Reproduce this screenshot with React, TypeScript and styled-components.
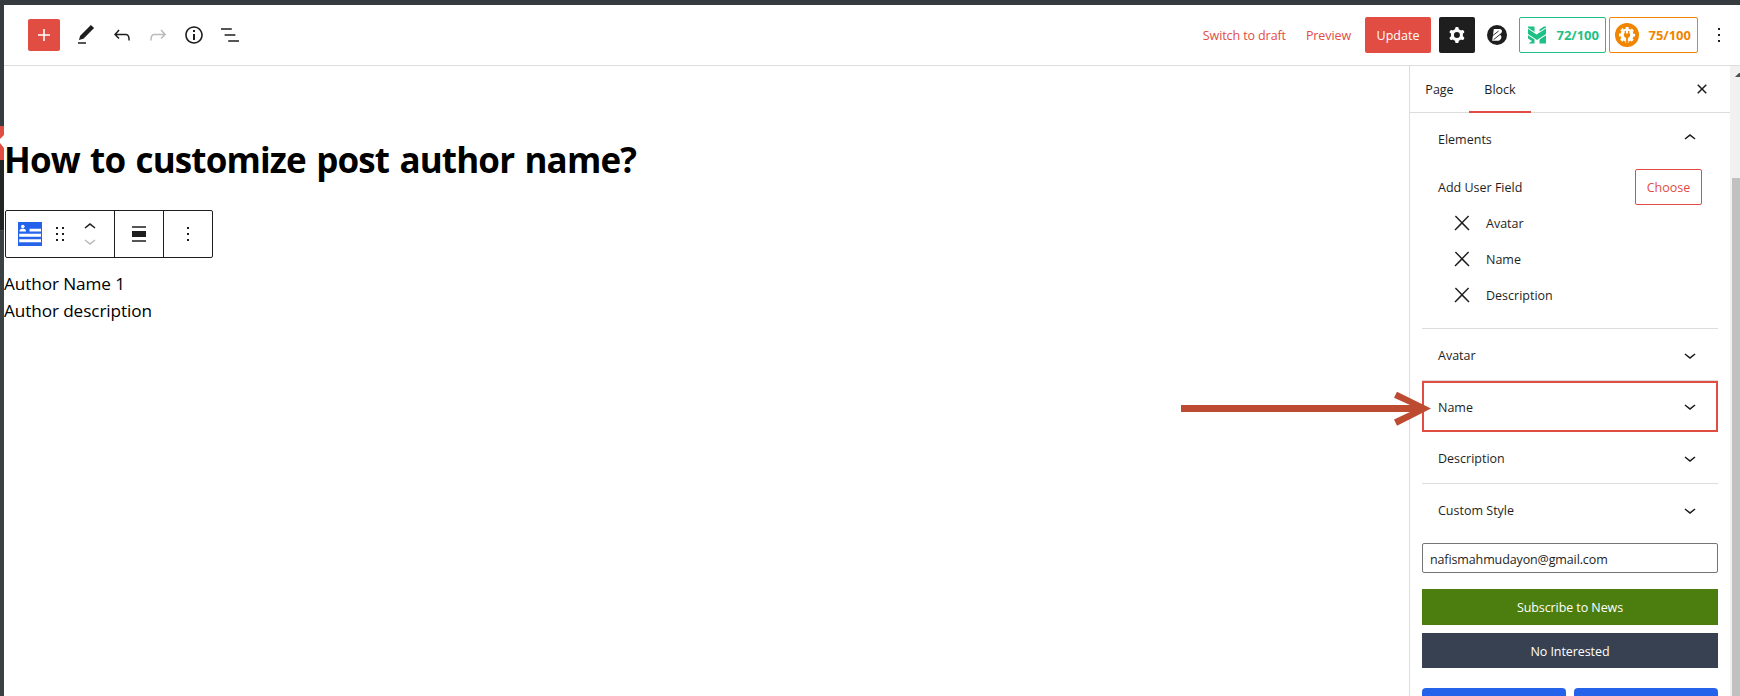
import React from "react";
import styled, { createGlobalStyle } from "styled-components";

const Global = createGlobalStyle`
  *, *::before, *::after { box-sizing: border-box; }
  html, body { margin: 0; padding: 0; }
  body {
    width: 1740px; height: 696px; overflow: hidden; background: #fff; color: #1e1e1e;
    font-family: "Open Sans", "Noto Sans", sans-serif; font-size: 12.5px; line-height: 18px;
  }
  button, input { font: inherit; color: inherit; margin: 0; }
  svg { display: block; flex: none; }
`;

const Page = styled.div`
  position: relative; width: 1740px; height: 696px; overflow: hidden;
  display: flex; flex-direction: column;
`;
const AdminBar = styled.div`height: 5px; flex: none; background: #363b3f;`;
const Shell = styled.div`display: flex; flex: 1; min-height: 0;`;
const AdminMenu = styled.div`width: 4px; flex: none; display: flex; flex-direction: column; background: #3b4042;`;
const MenuSlice = styled.div<{ $h: number; $bg: string }>`
  height: ${p => p.$h}px; flex: none; background: ${p => p.$bg};
`;
const Editor = styled.div`flex: 1; min-width: 0; display: flex; flex-direction: column;`;

const Header = styled.header`
  height: 61px; flex: none; border-bottom: 1px solid #ddd;
  display: flex; align-items: center; justify-content: space-between; padding: 0 3px 0 24px;
`;
const Group = styled.div`display: flex; align-items: center;`;
const IconButton = styled.button<{ $dim?: boolean }>`
  width: 36px; height: 36px; padding: 0; border: 0; background: none;
  display: flex; align-items: center; justify-content: center;
  color: ${p => (p.$dim ? "#bbb" : "#1e1e1e")};
`;
const AddButton = styled(IconButton)`
  width: 32px; height: 32px; margin-right: 8px; background: #e14d43; color: #fff; border-radius: 2px;
`;
const LinkButton = styled.button<{ $gap: number }>`
  border: 0; background: none; padding: 2px 0 0; margin-right: ${p => p.$gap}px; color: #e14d43; white-space: nowrap;
  letter-spacing: -0.1px;
`;
const UpdateButton = styled.button`
  width: 66px; height: 36px; padding: 2px 0 0; border: 0; border-radius: 2px; background: #e14d43; color: #fff; margin-right: 8px;
`;
const SettingsButton = styled(IconButton)`background: #1e1e1e; color: #fff; border-radius: 2px;`;
const Brand = styled.div`width: 20px; margin: 0 12px;`;
const Score = styled.button<{ $c: string; $w: number; $pad: number }>`
  width: ${p => p.$w}px; height: 36px; padding: 0 6px 0 ${p => p.$pad}px; margin-right: 3px;
  border: 1px solid ${p => p.$c}; border-radius: 2px; background: #fff; color: ${p => p.$c};
  font-weight: 700; font-size: 13px; display: flex; align-items: center; justify-content: space-between;
`;

const Body = styled.div`display: flex; flex: 1; min-height: 0;`;
const Canvas = styled.main`flex: 1; min-width: 0; padding-top: 69px;`;
const Title = styled.h1`
  margin: 0 0 25px; color: #000; font-size: 35px; line-height: 50px; font-weight: 700; white-space: nowrap;
  letter-spacing: -0.85px; word-spacing: 2px;
`;
const Toolbar = styled.div`
  width: 208px; height: 48px; margin-left: 1px; border: 1px solid #1e1e1e; border-radius: 2px; display: flex;
`;
const ToolCell = styled.div<{ $w: number; $last?: boolean }>`
  width: ${p => p.$w}px; height: 100%; display: flex; align-items: center; justify-content: center;
  border-right: ${p => (p.$last ? "0" : "1px solid #1e1e1e")};
`;
const BlockCell = styled(ToolCell)`justify-content: flex-start; padding-left: 12px; gap: 6px;`;
const Movers = styled.div`display: flex; flex-direction: column; gap: 0;`;
const AuthorText = styled.div`
  margin-top: 12px; color: #000; font-size: 17.2px; line-height: 27px; letter-spacing: -0.1px;
  p { margin: 0; }
`;

const Sidebar = styled.aside`width: 321px; flex: none; border-left: 1px solid #ddd;`;
const Tabs = styled.div`
  height: 47px; border-bottom: 1px solid #ddd; display: flex; align-items: flex-start; padding-right: 10px;
`;
const Tab = styled.button<{ $w: number; $active?: boolean }>`
  width: ${p => p.$w}px; height: 47px; padding: ${p => (p.$active ? "2px 0 0" : "0")}; border: 0; background: none; text-align: center;
  ${p => p.$active && "border-bottom: 2px solid #e14d43;"}
  font-weight: 500;
`;
const TabSpacer = styled.div`flex: 1;`;
const CloseButton = styled(IconButton)`height: 46px;`;
const Panels = styled.div`padding: 0 12px;`;
const Panel = styled.section`border-bottom: 1px solid #ddd;`;
const PanelHead = styled.button<{ $h: number; $outlined?: boolean; $lift?: number }>`
  width: 100%; height: ${p => p.$h}px; border: ${p => (p.$outlined ? "2px solid #e14d43" : "0")}; background: none;
  padding: 0 ${p => (p.$outlined ? 14 : 16)}px ${p => p.$lift ?? 0}px ${p => (p.$outlined ? 14 : 16)}px;
  display: flex; align-items: center; justify-content: space-between; font-weight: 500;
`;
const Label = styled.span<{ $drop?: number }>`padding-top: ${p => p.$drop ?? 2}px;`;
const ElementsBody = styled.div`padding: 3px 16px 15px;`;
const FieldRow = styled.div`height: 36px; display: flex; align-items: center; justify-content: space-between;`;
const Choose = styled.button`
  width: 67px; height: 36px; border: 1px solid #e14d43; border-radius: 2px; background: #fff; color: #e14d43; padding: 2px 0 0;
`;
const FieldItem = styled.div`height: 36px; display: flex; align-items: center; gap: 12px; padding-left: 12px;`;
const Email = styled.input`
  display: block; width: 296px; height: 30px; border: 1px solid #757575; border-radius: 2px; padding: 2px 7px 0; margin: 6px 0 16px; outline: 0;
  letter-spacing: -0.12px;
`;
const Wide = styled.button<{ $bg: string; $h: number; $mb: number }>`
  display: block; width: 100%; height: ${p => p.$h}px; margin-bottom: ${p => p.$mb}px;
  border: 0; padding: 2px 0 0; background: ${p => p.$bg}; color: #fff; font-weight: 500; letter-spacing: -0.08px;
`;
const BlueRow = styled.div`display: flex; gap: 8px;`;
const Blue = styled.div`flex: 1; height: 36px; border-radius: 4px; background: #2563eb;`;
const Scrollbar = styled.div`
  width: 10px; flex: none; background: #f1f1f1; display: flex; flex-direction: column; align-items: flex-end; gap: 92px; overflow: hidden;
`;
const Thumb = styled.div`width: 8px; flex: 1; background: #c1c1c1;`;
const Arrow = styled.svg`position: absolute; left: 1180px; top: 390px;`;

const Icon = ({ d, size = 24 }: { d: string; size?: number }) => (
  <svg width={size} height={size} viewBox="0 0 24 24" fill="currentColor"><path d={d} /></svg>
);

const I = {
  plus: "M18 11.2h-5.2V6h-1.6v5.2H6v1.6h5.2V18h1.6v-5.2H18z",
  pen: "M20.1 5.1L16.9 2 6.2 12.7l-1.3 4.4 4.5-1.3L20.1 5.1zM4 20.8h8v-1.5H4v1.5z",
  undo: "M18.3 11.7c-.6-.6-1.4-.9-2.3-.9H6.7l2.9-3.3-1.1-1-4.5 5L8.5 16l1-1-2.7-2.7H16c.5 0 .9.2 1.3.5 1 1 1 3.4 1 4.5v.3h1.5v-.2c0-1.5 0-4.3-1.5-5.7z",
  redo: "M15.6 6.5l-1.1 1 2.9 3.3H8c-.9 0-1.7.3-2.3.9-1.4 1.5-1.4 4.2-1.4 5.6v.2h1.5v-.3c0-1.1 0-3.5 1-4.5.3-.3.7-.5 1.3-.5h9.2L14.5 15l1.1 1.1 4.6-4.6-4.6-5z",
  info: "M12 3.2c-4.8 0-8.8 3.9-8.8 8.8 0 4.8 3.9 8.8 8.8 8.8 4.8 0 8.8-3.9 8.8-8.8 0-4.8-4-8.8-8.8-8.8zm0 16c-4 0-7.2-3.3-7.2-7.2C4.8 8 8 4.8 12 4.8s7.2 3.3 7.2 7.2c0 4-3.2 7.2-7.2 7.2zM11 17h2v-6h-2v6zm0-8h2V7h-2v2z",
  list: "M13.8 5.2H3v1.5h10.8V5.2zm-3.6 12v1.5H21v-1.5H10.2zm7.2-6H6.6v1.5h10.8v-1.5z",
  more: "M13 19h-2v-2h2v2zm0-6h-2v-2h2v2zm0-6h-2V5h2v2z",
  closeSmall: "M12 13.06l3.712 3.713 1.061-1.06L13.061 12l3.712-3.712-1.06-1.06L12 10.938 8.288 7.227l-1.061 1.06L10.939 12l-3.712 3.712 1.06 1.061L12 13.061z",
  close: "M13 11.8l6.1-6.3-1-1-6.1 6.2-6.1-6.2-1 1 6.1 6.3-6.5 6.7 1 1 6.5-6.6 6.5 6.6 1-1z",
  down: "M17.5 11.6L12 16l-5.5-4.4.9-1.2L12 14l4.5-3.6 1 1.2z",
  up: "M6.5 12.4L12 8l5.5 4.4-.9 1.2L12 10l-4.5 3.6-1-1.2z",
  drag: "M8 7h2V5H8v2zm0 6h2v-2H8v2zm0 6h2v-2H8v2zm6-14v2h2V5h-2zm0 8h2v-2h-2v2zm0 6h2v-2h-2v2z",
};

const Gear = () => (
  <svg width="24" height="24" viewBox="0 0 24 24" fill="currentColor" fillRule="evenodd">
    <path d="M10.289 4.836A1 1 0 0111.275 4h1.306a1 1 0 01.987.836l.244 1.466c.787.26 1.503.679 2.108 1.218l1.393-.522a1 1 0 011.216.437l.653 1.13a1 1 0 01-.23 1.273l-1.148.944a6.025 6.025 0 010 2.435l1.149.946a1 1 0 01.23 1.272l-.653 1.13a1 1 0 01-1.216.437l-1.394-.522c-.605.54-1.32.958-2.108 1.218l-.244 1.466a1 1 0 01-.987.836h-1.306a1 1 0 01-.986-.836l-.244-1.466a5.995 5.995 0 01-2.108-1.218l-1.394.522a1 1 0 01-1.217-.436l-.653-1.131a1 1 0 01.23-1.272l1.149-.946a6.026 6.026 0 010-2.435l-1.148-.944a1 1 0 01-.23-1.272l.653-1.131a1 1 0 011.217-.437l1.393.522a5.994 5.994 0 012.108-1.218l.244-1.466zM14.929 12a3 3 0 11-6 0 3 3 0 016 0z" />
  </svg>
);

const BrandMark = () => (
  <svg width="20" height="20" viewBox="0 0 20 20">
    <circle cx="10" cy="10" r="10" fill="#1e1e1e" />
    <path d="M6.800 4h5.600c2.600 0 3.400 2.600 1.700 4.300l-1.400 1.300c2 .9 2.200 3.100.9 4.700-.8 1-1.900 1.500-3.200 1.500H5.200z" fill="#fff" />
    <path d="M5 11.200L11.600 6M6.600 14.600l6.800-5.400" stroke="#1e1e1e" strokeWidth="0.9" />
  </svg>
);

const RibbonMark = () => (
  <svg width="18" height="18" viewBox="0 0 18 18" fill="#1fc085">
    <path d="M0 .5H6.500V6L0 1.700zM11.500 5.500V3.500L16 .5H18V1.500zM0 2.800L8.500 8.600L18 2.600V8L9 14L0 8zM0 9.200L6.500 13.600V17.500H.5L4 15L0 12.400zM18 9.200V17.500H11.500V13.500z" />
  </svg>
);

const PlugMark = () => (
  <svg width="24" height="24" viewBox="0 0 24 24">
    <circle cx="12" cy="12" r="12" fill="#f18500" />
    <circle cx="12" cy="12" r="6.6" fill="#fff" />
    <circle cx="12" cy="12" r="7" fill="none" stroke="#fff" strokeWidth="2.2" strokeDasharray="3 2.5" strokeDashoffset="1.5" />
    <path d="M10.300 8v3M13.700 8v3" stroke="#f18500" strokeWidth="1.3" />
    <path d="M8.900 10.400h6.200v1.400c0 1.700-.9 2.800-2.200 3.200V20h-1.800v-5c-1.300-.4-2.200-1.500-2.200-3.200z" fill="#f18500" />
  </svg>
);

const AuthorBlockIcon = () => (
  <svg width="24" height="24" viewBox="0 0 24 24">
    <path fill="#2563eb" d="M0 0h24v24H0z" />
    <g fill="#fff">
      <circle cx="4.8" cy="4.6" r="1.8" />
      <path d="M1.5 9.4c0-1.6 1-2.6 2.3-2.6h2c1.300 0 2.200 1 2.200 2.600zM11.500 6.800h11.500v2.600H11.500zM1.200 11.800h21.800v3H1.200zM1.200 17.200h21.800v3H1.200z" />
    </g>
  </svg>
);

const AlignIcon = () => (
  <svg width="24" height="24" viewBox="0 0 24 24" fill="#1e1e1e">
    <path d="M5 4.200h14v1.500H5zM5 9h14v6H5zM5 18.300h14v1.500H5z" />
  </svg>
);

const Mover = ({ d, dim }: { d: string; dim?: boolean }) => (
  <svg width="24" height="16" viewBox={dim ? "0 5 24 16" : "0 3 24 16"} fill={dim ? "#bbb" : "#1e1e1e"}><path d={d} /></svg>
);

export default function App() {
  return (
    <>
      <Global />
      <Page>
        <AdminBar />
        <Shell>
          <AdminMenu>
            <MenuSlice $h={121} $bg="#363b3f" />
            <svg width="4" height="34" viewBox="0 0 4 34"><path fill="#e14d43" d="M0 0h4v34H0z" /><path fill="#fff" d="M4 9L0 13v4l4 5z" /></svg>
            <MenuSlice $h={70} $bg="#222526" />
            <MenuSlice $h={1} $bg="#4a4e50" />
          </AdminMenu>
          <Editor>
            <Header>
              <Group>
                <AddButton><Icon d={I.plus} /></AddButton>
                <IconButton><Icon d={I.pen} /></IconButton>
                <IconButton><Icon d={I.undo} /></IconButton>
                <IconButton $dim><Icon d={I.redo} /></IconButton>
                <IconButton><Icon d={I.info} /></IconButton>
                <IconButton><Icon d={I.list} /></IconButton>
              </Group>
              <Group>
                <LinkButton $gap={20}>Switch to draft</LinkButton>
                <LinkButton $gap={14}>Preview</LinkButton>
                <UpdateButton>Update</UpdateButton>
                <SettingsButton><Gear /></SettingsButton>
                <Brand><BrandMark /></Brand>
                <Score $c="#1fc085" $w={87} $pad={8}><RibbonMark />72/100</Score>
                <Score $c="#f18500" $w={89} $pad={5}><PlugMark />75/100</Score>
                <IconButton><Icon d={I.more} /></IconButton>
              </Group>
            </Header>
            <Body>
              <Canvas>
                <Title>How to customize post author name?</Title>
                <Toolbar>
                  <BlockCell $w={109}>
                    <AuthorBlockIcon />
                    <Icon d={I.drag} />
                    <Movers><Mover d={I.up} /><Mover d={I.down} dim /></Movers>
                  </BlockCell>
                  <ToolCell $w={49}><AlignIcon /></ToolCell>
                  <ToolCell $w={48} $last><Icon d={I.more} /></ToolCell>
                </Toolbar>
                <AuthorText><p>Author Name 1</p><p>Author description</p></AuthorText>
              </Canvas>
              <Sidebar>
                <Tabs>
                  <Tab $w={59}>Page</Tab>
                  <Tab $w={62} $active>Block</Tab>
                  <TabSpacer />
                  <CloseButton><Icon d={I.closeSmall} /></CloseButton>
                </Tabs>
                <Panels>
                  <Panel>
                    <PanelHead $h={53} $lift={3}><Label $drop={3}>Elements</Label><Icon d={I.up} /></PanelHead>
                    <ElementsBody>
                      <FieldRow><Label>Add User Field</Label><Choose>Choose</Choose></FieldRow>
                      {["Avatar", "Name", "Description"].map(name => (
                        <FieldItem key={name}><Icon d={I.close} /><Label>{name}</Label></FieldItem>
                      ))}
                    </ElementsBody>
                  </Panel>
                  <Panel><PanelHead $h={51}><Label>Avatar</Label><Icon d={I.down} /></PanelHead></Panel>
                  <PanelHead $h={51} $outlined $lift={1}><Label $drop={3}>Name</Label><Icon d={I.down} /></PanelHead>
                  <Panel><PanelHead $h={51}><Label>Description</Label><Icon d={I.down} /></PanelHead></Panel>
                  <PanelHead $h={53} $lift={2}><Label>Custom Style</Label><Icon d={I.down} /></PanelHead>
                  <Email defaultValue="nafismahmudayon@gmail.com" />
                  <Wide $bg="#4b7d0f" $h={36} $mb={8}>Subscribe to News</Wide>
                  <Wide $bg="#374151" $h={35} $mb={20}>No Interested</Wide>
                  <BlueRow><Blue /><Blue /></BlueRow>
                </Panels>
              </Sidebar>
              <Scrollbar>
                <svg width="5" height="20" viewBox="0 0 5 20"><path d="M0 11L4 7h2v4z" fill="#505050" /></svg>
                <Thumb />
              </Scrollbar>
            </Body>
          </Editor>
        </Shell>
        <Arrow width="254" height="38" viewBox="1180 390 254 38">
          <path fill="#bc4b32" d="M1181 405H1410L1394 397.700L1397 391.700L1431 408.500L1397 425.700L1394 419.500L1410 412H1181z" />
        </Arrow>
      </Page>
    </>
  );
}
